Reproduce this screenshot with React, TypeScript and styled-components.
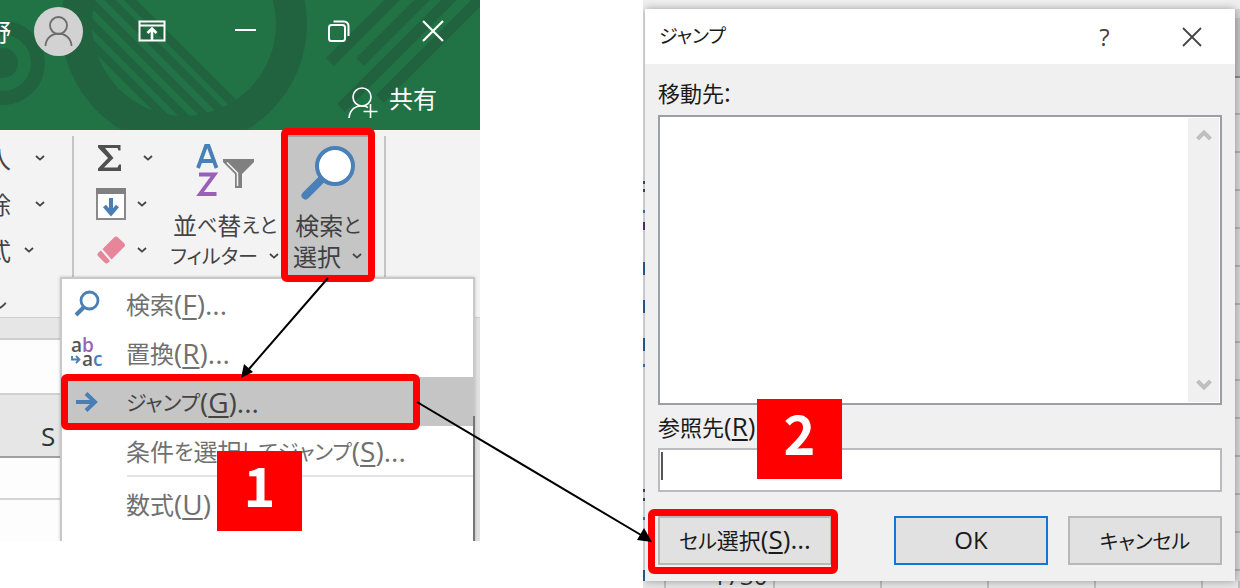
import React from "react";
import styled, { createGlobalStyle, css } from "styled-components";

const GlobalStyle = createGlobalStyle`
  * { box-sizing: border-box; }
  body { margin: 0; background: #fff; }
  body, button, input {
    font-family: "Noto Sans CJK JP", "Open Sans", sans-serif;
    font-feature-settings: "palt";
  }
  button { border: 0; padding: 0; margin: 0; background: none; color: inherit; }
`;

const Stage = styled.main`
  position: relative;
  display: grid;
  grid-template-columns: minmax(0, 480fr) minmax(0, 163fr) minmax(0, 597fr);
  align-items: start;
  overflow: hidden;
`;

/* ---------- shared ---------- */

const Highlight = styled.span<{ $inset: string }>`
  position: absolute;
  inset: ${(p) => p.$inset};
  border: 7px solid #ff0000;
  border-radius: 6px;
  pointer-events: none;
  z-index: 2;
`;

const StepBadge = styled.strong<{ $left: string; $top: string }>`
  position: absolute;
  left: ${(p) => p.$left};
  top: ${(p) => p.$top};
  width: 85px;
  height: 80px;
  background: #ff0000;
  color: #fff;
  font-size: 54px;
  line-height: 66px;
  font-weight: 700;
  text-align: center;
  z-index: 3;
`;

const Latin = styled.span<{ $size: number }>`
  font-family: "Open Sans", sans-serif;
  font-size: ${(p) => p.$size}px;
  line-height: 1;
  u {
    text-decoration-thickness: 2px;
    text-underline-offset: 3px;
  }
`;

const Kana = styled.span<{ $size: number }>`
  font-size: ${(p) => p.$size}px;
  line-height: 1;
`;

const Arrows = styled.svg`
  position: absolute;
  inset: 0;
  width: 100%;
  height: 588px;
  pointer-events: none;
  z-index: 5;
`;

/* ---------- workbook window ---------- */

const Workbook = styled.section`
  position: relative;
  height: 541px;
  display: flex;
  flex-direction: column;
  overflow: hidden;
  background: #fdfdfd;
`;

const TitleBar = styled.header`
  position: relative;
  height: 130px;
  flex: none;
  background: #217346;
  color: #fff;
  display: flex;
  flex-direction: column;
  overflow: hidden;
`;

const Pattern = styled.svg`
  position: absolute;
  inset: 0;
  width: 100%;
  height: 100%;
`;

const TitleRow = styled.div`
  position: relative;
  display: flex;
  align-items: center;
  height: 62px;
`;

const UserName = styled.span`
  width: 11px;
  display: flex;
  justify-content: flex-end;
  font-size: 24px;
  line-height: 32px;
  margin-right: 23px;
`;

const Avatar = styled.span`
  width: 49px;
  height: 49px;
  flex: none;
  border-radius: 50%;
  background: #d2d2d2;
  margin-right: 22px;
  svg { display: block; }
`;

const WindowButton = styled.button`
  flex: 1;
  height: 62px;
  display: flex;
  align-items: center;
  justify-content: center;
`;

const ShareButton = styled.button`
  position: relative;
  align-self: flex-end;
  display: flex;
  align-items: center;
  gap: 11px;
  height: 40px;
  margin: 21px 43px 0 0;
  color: #fff;
  font-size: 24px;
  line-height: 32px;
  span { padding-bottom: 10px; }
`;

const Ribbon = styled.div`
  height: 188px;
  flex: none;
  display: flex;
  align-items: flex-start;
  background: #f3f3f3;
  border-bottom: 1px solid #cfcfcf;
  color: #444;
`;

const RibbonGroup = styled.div<{ $width?: string }>`
  width: ${(p) => p.$width ?? "auto"};
  height: 188px;
  display: flex;
  position: relative;
  padding-top: 5px;
  &::after {
    content: "";
    position: absolute;
    right: 0;
    top: 6px;
    height: 150px;
    width: 2px;
    background: #c4c4c4;
  }
`;

const CellsColumn = styled.div`
  display: flex;
  flex-direction: column;
  width: 72px;
  overflow: hidden;
`;

const CellsButton = styled.button<{ $gap: number }>`
  height: 46px;
  display: flex;
  align-items: center;
  gap: ${(p) => p.$gap}px;
  font-size: 24px;
  line-height: 46px;
  > span {
    width: 11px;
    display: flex;
    justify-content: flex-end;
  }
`;

const GroupLabel = styled.span`
  width: 7px;
  display: flex;
  justify-content: flex-end;
  font-size: 22px;
  line-height: 32px;
  margin-top: 10px;
`;

const IconColumn = styled.div`
  display: flex;
  flex-direction: column;
  padding-left: 22px;
  width: 95px;
  flex: none;
`;

const IconButton = styled.button<{ $gap: number }>`
  height: 46px;
  display: flex;
  align-items: center;
  gap: ${(p) => p.$gap}px;
`;

const LargeButton = styled.button<{ $active?: boolean; $width: number }>`
  position: relative;
  width: ${(p) => p.$width}px;
  height: 142px;
  flex: none;
  display: flex;
  flex-direction: column;
  align-items: center;
  font-size: 24px;
  line-height: 31px;
  white-space: nowrap;
  color: #444;
  ${(p) =>
    p.$active &&
    css`
      margin-left: auto;
      margin-right: 17px;
      background: #c5c5c5;
      border-top: 2px solid #a2a2a2;
      color: #404040;
    `}
`;

const LargeIcon = styled.span<{ $active?: boolean }>`
  height: ${(p) => (p.$active ? 72 : 74)}px;
  padding-top: ${(p) => (p.$active ? 9 : 6)}px;
`;

const LabelLine = styled.span<{ $gap?: number }>`
  display: flex;
  align-items: center;
  gap: ${(p) => p.$gap ?? 0}px;
  height: 31px;
`;

const SheetStrip = styled.div<{ $height: number; $bg: string; $line: string }>`
  height: ${(p) => p.$height}px;
  flex: none;
  background: ${(p) => p.$bg};
  border-bottom: 2px solid ${(p) => p.$line};
`;

const ColumnHeader = styled(SheetStrip)`
  padding-left: 41px;
  font: 26px/82px "Open Sans", sans-serif;
  color: #333;
`;

const EdgeStrip = styled.div`
  position: absolute;
  right: 0;
  top: 318px;
  bottom: 0;
  width: 6px;
  background: #e1e1e1;
`;

const Menu = styled.div`
  position: absolute;
  left: 60px;
  right: 5px;
  top: 277px;
  bottom: 0;
  background: #fff;
  border: 2px solid #c8c8c8;
  border-bottom: 0;
  box-shadow: 0 0 3px rgba(0, 0, 0, 0.2);
  display: flex;
  flex-direction: column;
  z-index: 1;
  &::after {
    content: "";
    position: absolute;
    right: -2px;
    top: 137px;
    bottom: 0;
    width: 2px;
    background: #777;
  }
`;

const MenuItem = styled.button<{ $active?: boolean }>`
  position: relative;
  height: 49px;
  flex: none;
  display: flex;
  align-items: center;
  text-align: left;
  white-space: nowrap;
  font-size: 24px;
  line-height: 49px;
  color: ${(p) => (p.$active ? "#444" : "#707070")};
  background: ${(p) => (p.$active ? "#c5c5c5" : "transparent")};
`;

const MenuIcon = styled.span`
  width: 64px;
  padding-left: 8px;
  flex: none;
  display: flex;
  align-items: center;
`;

const MenuSeparator = styled.hr`
  width: calc(100% - 65px);
  margin: 0 0 2px 65px;
  border: 0;
  border-top: 2px solid #e1e3e6;
`;

/* ---------- dialog side ---------- */

const DialogSide = styled.section`
  position: relative;
  display: flex;
  flex-direction: column;
  overflow: hidden;
  background: #ececec;
`;

const BackTop = styled.div`
  height: 9px;
  background: #efefef;
`;

const BackMiddle = styled.div`
  display: flex;
`;

const LeftSliver = styled.div`
  width: 2px;
  background:
    linear-gradient(#4a4a6a, #4a4a6a) 0 172px / 2px 3px no-repeat,
    linear-gradient(#4a4a6a, #4a4a6a) 0 180px / 2px 3px no-repeat,
    linear-gradient(#3c7cc0, #3c7cc0) 0 201px / 2px 3px no-repeat,
    linear-gradient(#5c3566, #5c3566) 0 213px / 2px 8px no-repeat,
    linear-gradient(#2d6296, #2d6296) 0 253px / 2px 13px no-repeat,
    linear-gradient(#2d6296, #2d6296) 0 291px / 2px 13px no-repeat,
    linear-gradient(#2d6296, #2d6296) 0 329px / 2px 13px no-repeat,
    linear-gradient(#3c7cc0, #3c7cc0) 0 355px / 2px 3px no-repeat,
    linear-gradient(#4a4a6a, #4a4a6a) 0 480px / 2px 3px no-repeat,
    linear-gradient(#4a4a6a, #4a4a6a) 0 489px / 2px 3px no-repeat,
    linear-gradient(#3c7cc0, #3c7cc0) 0 508px / 2px 3px no-repeat,
    linear-gradient(#2d6296, #2d6296) 0 561px / 2px 11px no-repeat,
    #e9ebf0;
`;

const RightSliver = styled.div`
  width: 5px;
  background:
    linear-gradient(#8a8a8a, #8a8a8a) 0 67px / 5px 2px no-repeat,
    linear-gradient(#c4c4c4, #c4c4c4) 0 9px / 5px 60px no-repeat,
    repeating-linear-gradient(#d8d8d8 0 28px, #b4b4b4 28px 30px, #d8d8d8 30px 38px);
`;

const BackBottom = styled.div`
  height: 7px;
  display: flex;
  align-items: flex-end;
  overflow: hidden;
  background: #e6e6e6;
`;

const BackCell = styled.span<{ $flex: number }>`
  flex: ${(p) => p.$flex} 0 0;
  min-width: 0;
  height: 7px;
  border-right: 2px solid #bdbdbd;
  display: flex;
  justify-content: flex-end;
  align-items: flex-end;
  padding: 0 5px 5px 0;
  font: 24px/15px "Open Sans", sans-serif;
  color: #333;
`;

const Dialog = styled.div`
  position: relative;
  flex: 1;
  min-width: 0;
  display: flex;
  flex-direction: column;
  background: #f0f0f0;
  box-shadow: 0 0 8px rgba(0, 0, 0, 0.35);
  color: #1a1a1a;
  font-size: 22px;
  line-height: 32px;
  z-index: 1;
`;

const DialogTitleBar = styled.div`
  display: flex;
  align-items: center;
  height: 55px;
  background: #fff;
  padding-left: 14px;
`;

const DialogTitle = styled.h1`
  flex: 1;
  margin: 0;
  padding-bottom: 4px;
  font-size: 19px;
  font-weight: 400;
  line-height: 32px;
`;

const DialogControl = styled.button`
  width: 87px;
  height: 55px;
  display: flex;
  align-items: center;
  justify-content: center;
  font: 24px/32px "Open Sans", sans-serif;
  color: #444;
`;

const DialogBody = styled.div`
  display: flex;
  flex-direction: column;
  padding: 12px 13px 16px;
`;

const FieldLabel = styled.label`
  display: block;
  height: 32px;
`;

const ListBox = styled.div`
  height: 290px;
  margin: 7px 0 5px;
  display: flex;
  justify-content: flex-end;
  background: #fff;
  border: 2px solid #9b9fa7;
`;

const ScrollBar = styled.div`
  width: 31px;
  margin: 1px;
  display: flex;
  flex-direction: column;
  justify-content: space-between;
  background: #f0f0f0;
  button {
    height: 34px;
    display: flex;
    align-items: center;
    justify-content: center;
  }
`;

const InputWrap = styled.div`
  position: relative;
  display: flex;
  margin: 6px 0 24px;
  &::after {
    content: "";
    position: absolute;
    left: 3px;
    top: 4px;
    width: 2px;
    height: 28px;
    background: #555;
  }
`;

const ReferenceInput = styled.input`
  height: 44px;
  width: 100%;
  padding: 0 6px;
  border: 2px solid #b9bbc0;
  background: #fff;
  font-size: 22px;
  outline: 0;
`;

const ButtonRow = styled.div`
  display: flex;
  gap: 20px;
`;

const DialogButton = styled.button<{ $primary?: boolean; $push?: boolean; $width: number }>`
  position: relative;
  width: ${(p) => p.$width}px;
  height: 49px;
  margin-right: ${(p) => (p.$push ? "auto" : "0")};
  padding-bottom: 4px;
  background: #e1e1e1;
  border: 2px solid ${(p) => (p.$primary ? "#0f78d7" : "#b8b8b8")};
  font-size: 22px;
  line-height: 40px;
  color: #1a1a1a;
  white-space: nowrap;
`;

/* ---------- icons ---------- */

const Chevron = () => (
  <svg width="12" height="8" viewBox="0 0 12 8" fill="none" stroke="#444" strokeWidth="1.8">
    <path d="M2 2l4 3.6L10 2" />
  </svg>
);

const ScrollArrow = ({ down }: { down?: boolean }) => (
  <svg width="16" height="14" viewBox="0 0 16 14" fill="none" stroke="#bfbfbf" strokeWidth="4">
    <path d={down ? "M1.5 3L8 9.500L14.500 3" : "M1.5 11L8 4.500L14.500 11"} />
  </svg>
);

const TitlePattern = () => (
  <Pattern viewBox="0 0 480 130" preserveAspectRatio="xMinYMin slice" aria-hidden="true">
    <defs>
      <clipPath id="disc">
        <circle cx="184" cy="24" r="93" />
      </clipPath>
    </defs>
    <g stroke="#22633f" fill="none">
      <circle cx="3" cy="63" r="35" strokeWidth="14" />
      <circle cx="3" cy="63" r="15" fill="#22633f" stroke="none" />
      <circle cx="184" cy="24" r="107.500" strokeWidth="31" />
      <g strokeWidth="8" clipPath="url(#disc)">
        <path d="M38 -10L188 140M58 -10L208 140M79 -10L229 140M100 -10L250 140" />
        <path d="M120 -10L270 140" strokeWidth="9" />
      </g>
      <g strokeWidth="11">
        <path d="M330 62L402 -10M360 62L432 -10M341 108L459 -10M380 99L489 -10" />
      </g>
    </g>
  </Pattern>
);

const Magnifier = () => (
  <svg width="54" height="54" viewBox="0 0 54 54" fill="none">
    <path d="M4.500 49.500L23 31" stroke="#4a80b8" strokeWidth="8" strokeLinecap="round" />
    <circle cx="34" cy="20" r="18" fill="#fff" stroke="#4a80b8" strokeWidth="4" />
  </svg>
);

const SearchSmall = () => (
  <svg width="30" height="28" viewBox="0 0 30 28" fill="none" stroke="#4a7fb5">
    <path d="M6 25L14 17" strokeWidth="4" />
    <circle cx="19.500" cy="10.500" r="8.500" strokeWidth="2.800" />
  </svg>
);

const ReplaceIcon = () => (
  <svg width="36" height="36" viewBox="0 0 36 36" fontFamily="Open Sans, sans-serif" fontSize="19" fontWeight="600">
    <text x="1" y="17" fill="#555">a</text>
    <text x="12" y="17" fill="#9a63b8">b</text>
    <text x="12" y="31" fill="#555">a</text>
    <text x="23" y="31" fill="#4a7fb5">c</text>
    <path d="M2 21v3.500h7M6 21l3.500 3.500L6 28" fill="none" stroke="#4a7fb5" strokeWidth="1.800" />
  </svg>
);

const App = () => (
  <>
    <GlobalStyle />
    <Stage>
      <Workbook>
        <TitleBar>
          <TitlePattern />
          <TitleRow>
            <UserName>野</UserName>
            <Avatar>
              <svg width="49" height="49" viewBox="0 0 49 49" fill="none" stroke="#6c6c6c" strokeWidth="1.800">
                <circle cx="24.500" cy="18.500" r="8.500" />
                <path d="M11.500 39C12 22.500 37 22.500 37.500 39" />
              </svg>
            </Avatar>
            <WindowButton aria-label="リボンの表示オプション">
              <svg width="28" height="22" viewBox="0 0 28 22" fill="none" stroke="#fff" strokeWidth="2">
                <path d="M1.500 1.500h25v19h-25zM1.500 5.500h25" />
                <path d="M14 20V9M9.500 13l4.500-4.500 4.500 4.500" strokeWidth="2.600" />
              </svg>
            </WindowButton>
            <WindowButton aria-label="最小化">
              <svg width="22" height="4" viewBox="0 0 22 4">
                <path d="M0 1h21" stroke="#fff" strokeWidth="2" />
              </svg>
            </WindowButton>
            <WindowButton aria-label="元に戻す">
              <svg width="22" height="22" viewBox="0 0 22 22" fill="none" stroke="#fff" strokeWidth="2">
                <rect x="1" y="5" width="16" height="16" rx="2.500" />
                <path d="M5.500 1.500H16a4.500 4.500 0 0 1 4.500 4.500v10" />
              </svg>
            </WindowButton>
            <WindowButton aria-label="閉じる">
              <svg width="22" height="22" viewBox="0 0 22 22" stroke="#fff" strokeWidth="2.200">
                <path d="M1 1l20 20M21 1L1 21" />
              </svg>
            </WindowButton>
          </TitleRow>
          <ShareButton>
            <svg width="30" height="32" viewBox="0 0 30 32" fill="none" stroke="#fff" strokeWidth="1.600">
              <circle cx="14" cy="10" r="9" />
              <path d="M1 31C2 22 8 18.500 14 19c3 0 4.500.5 6 1.500M22.500 17v14M15.500 24.500h14" />
            </svg>
            <span>共有</span>
          </ShareButton>
        </TitleBar>

        <Ribbon>
          <RibbonGroup $width="74px">
            <CellsColumn>
              <CellsButton $gap={23}>
                <span>入</span>
                <Chevron />
              </CellsButton>
              <CellsButton $gap={23}>
                <span>除</span>
                <Chevron />
              </CellsButton>
              <CellsButton $gap={12}>
                <span>式</span>
                <Chevron />
              </CellsButton>
              <GroupLabel>ル</GroupLabel>
            </CellsColumn>
          </RibbonGroup>
          <RibbonGroup $width="312px">
            <IconColumn>
              <IconButton $gap={16} aria-label="合計">
                <svg width="30" height="28" viewBox="0 0 30 28">
                  <path d="M2 1h22.500v5.500h-2l-1-2.500H9L17.500 14 8 23.500H21.500l1.500-3H25V27H2v-2.500L12 14 2 3.500z" fill="#505050" />
                </svg>
                <Chevron />
              </IconButton>
              <IconButton $gap={10} aria-label="フィル">
                <svg width="30" height="32" viewBox="0 0 30 32">
                  <rect x="1" y="1" width="28" height="30" fill="#fff" stroke="#8a8a8a" strokeWidth="2" />
                  <path d="M0 0h30v6H0z" fill="#808080" />
                  <path d="M15 10v15M8.500 18l6.500 7.500 6.500-7.500" fill="none" stroke="#4a7fb5" strokeWidth="4" />
                </svg>
                <Chevron />
              </IconButton>
              <IconButton $gap={10} aria-label="クリア">
                <svg width="30" height="30" viewBox="0 0 30 30" fill="#e7869a">
                  <path d="M18 2.500Q20 .5 22 2.500L28 8Q30 10 28 12L15.500 24.500 6.500 14zM5 15.500L14 26 12.500 27.500Q10.500 29.500 8.500 27.500L2 21Q.5 19 2.500 17.500z" />
                </svg>
                <Chevron />
              </IconButton>
            </IconColumn>
            <LargeButton $width={112}>
              <LargeIcon>
                <svg width="60" height="58" viewBox="0 0 60 58">
                  <g fill="none" strokeWidth="3.800">
                    <path d="M3 27L11 5h2.500L21.500 27M6 20h13" stroke="#4a80b8" />
                    <path d="M4 33.500H19.500L5 53H21.500" stroke="#9a5fb8" />
                  </g>
                  <path d="M28 18h31v3L47 33v14h-7V33L28 21z" fill="#808080" />
                  <path d="M32 21.500L42.500 32v13" fill="none" stroke="#f3f3f3" strokeWidth="1.500" />
                </svg>
              </LargeIcon>
              <LabelLine>
                並<Kana $size={20}>べ</Kana>替<Kana $size={20}>えと</Kana>
              </LabelLine>
              <LabelLine $gap={10}>
                <Kana $size={20}>フィルター</Kana>
                <Chevron />
              </LabelLine>
            </LargeButton>
            <LargeButton $width={82} $active aria-expanded="true">
              <LargeIcon $active>
                <Magnifier />
              </LargeIcon>
              <LabelLine>
                検索<Kana $size={20}>と</Kana>
              </LabelLine>
              <LabelLine $gap={10}>
                選択
                <Chevron />
              </LabelLine>
              <Highlight $inset="-9px -6px -5px" />
            </LargeButton>
          </RibbonGroup>
        </Ribbon>

        <SheetStrip $height={22} $bg="#e6e6e6" $line="#cfcfcf" />
        <SheetStrip $height={55} $bg="#fdfdfd" $line="#cfcfcf" />
        <ColumnHeader $height={63} $bg="#e6e6e6" $line="#a0a0a0">S</ColumnHeader>
        <SheetStrip $height={42} $bg="#fdfdfd" $line="#d4d4d4" />

        <EdgeStrip />
        <Menu role="menu">
          <MenuItem role="menuitem">
            <MenuIcon>
              <SearchSmall />
            </MenuIcon>
            検索<Latin $size={28}>(<u>F</u>)...</Latin>
          </MenuItem>
          <MenuItem role="menuitem">
            <MenuIcon>
              <ReplaceIcon />
            </MenuIcon>
            置換<Latin $size={28}>(<u>R</u>)...</Latin>
          </MenuItem>
          <MenuItem role="menuitem" $active>
            <MenuIcon>
              <svg width="32" height="20" viewBox="0 0 32 20" fill="none" stroke="#4a7fb5" strokeWidth="4">
                <path d="M6 10h18M16 1.500L25 10l-9 8.500" />
              </svg>
            </MenuIcon>
            <Kana $size={21}>ジャンプ</Kana>
            <Latin $size={28}>(<u>G</u>)...</Latin>
            <Highlight $inset="-3px 53px -4px -1px" />
          </MenuItem>
          <MenuItem role="menuitem">
            <MenuIcon />
            条件<Kana $size={21}>を</Kana>選択<Kana $size={21}>してジャンプ</Kana>
            <Latin $size={28}>(<u>S</u>)...</Latin>
          </MenuItem>
          <MenuSeparator />
          <MenuItem role="menuitem">
            <MenuIcon />
            数式<Latin $size={28}>(<u>U</u>)</Latin>
          </MenuItem>
          <StepBadge $left="155px" $top="172px">1</StepBadge>
        </Menu>
      </Workbook>

      <span />

      <DialogSide>
        <BackTop />
        <BackMiddle>
          <LeftSliver />
          <Dialog role="dialog" aria-labelledby="dialog-title">
            <DialogTitleBar>
              <DialogTitle id="dialog-title">ジャンプ</DialogTitle>
              <DialogControl>?</DialogControl>
              <DialogControl aria-label="閉じる">
                <svg width="20" height="20" viewBox="0 0 20 20" stroke="#444" strokeWidth="1.800">
                  <path d="M1 1l18 18M19 1L1 19" />
                </svg>
              </DialogControl>
            </DialogTitleBar>
            <DialogBody>
              <FieldLabel as="span" id="goto-label">
                移動先<Latin $size={26}>:</Latin>
              </FieldLabel>
              <ListBox role="listbox" aria-labelledby="goto-label">
                <ScrollBar>
                  <button aria-label="上へ"><ScrollArrow /></button>
                  <button aria-label="下へ"><ScrollArrow down /></button>
                </ScrollBar>
              </ListBox>
              <FieldLabel htmlFor="reference">
                参照先<Latin $size={26}>(<u>R</u>)</Latin>
              </FieldLabel>
              <InputWrap>
                <ReferenceInput id="reference" type="text" />
              </InputWrap>
              <ButtonRow>
                <DialogButton $width={174} $push>
                  <Kana $size={20}>セル</Kana>選択<Latin $size={26}>(<u>S</u>)...</Latin>
                  <Highlight $inset="-9px -8px -11px -12px" />
                </DialogButton>
                <DialogButton $width={154} $primary>
                  <Latin $size={24}>OK</Latin>
                </DialogButton>
                <DialogButton $width={154}>
                  <Kana $size={20}>キャンセル</Kana>
                </DialogButton>
              </ButtonRow>
            </DialogBody>
            <StepBadge $left="112px" $top="390px">2</StepBadge>
          </Dialog>
          <RightSliver />
        </BackMiddle>
        <BackBottom>
          <BackCell $flex={17} />
          <BackCell $flex={111}>1730</BackCell>
          <BackCell $flex={109} />
          <BackCell $flex={109} />
          <BackCell $flex={109} />
          <BackCell $flex={109} />
          <BackCell $flex={33} />
        </BackBottom>
      </DialogSide>

      <Arrows viewBox="0 0 1240 588" preserveAspectRatio="none" aria-hidden="true">
        <g stroke="#000" strokeWidth="2">
          <path d="M328 278L249 369M417 402L641 535" />
        </g>
        <path d="M241 378L244 364L253 372zM652 542L637 540L644 528z" />
      </Arrows>
    </Stage>
  </>
);

export default App;
